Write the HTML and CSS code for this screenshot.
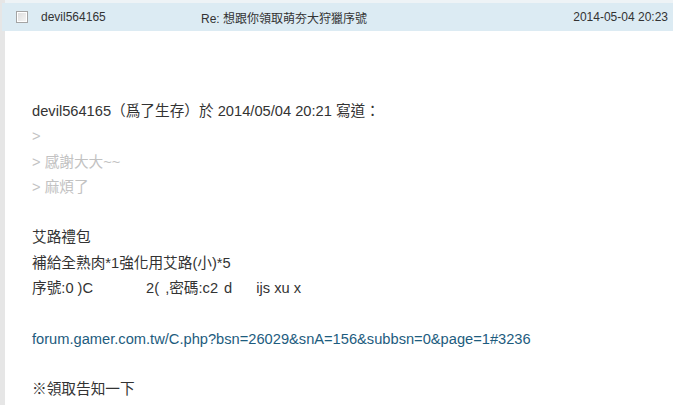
FILE: index.html
```html
<!DOCTYPE html>
<html lang="zh-Hant">
<head>
    <meta charset="UTF-8">
    <title>Re: 想跟你領取萌夯大狩獵序號</title>
    <link rel="stylesheet" href="styles.css">
</head>
<body>
    <div class="mail">
        <!-- Message header row -->
        <div class="mail-head">
            <span class="check"></span>
            <span class="from">devil564165</span>
            <span class="subject">Re: 想跟你領取萌夯大狩獵序號</span>
            <span class="date">2014-05-04 20:23</span>
        </div>

        <!-- Message body -->
        <div class="mail-body">
            <p>devil564165（爲了生存）於 2014/05/04 20:21 寫道：</p>
            <p class="quote">&gt;</p>
            <p class="quote">&gt; 感謝大大~~</p>
            <p class="quote">&gt; 麻煩了</p>
            <p>&nbsp;</p>
            <p>艾路禮包</p>
            <p>補給全熟肉*1強化用艾路(小)*5</p>
            <p>序號:0 )C<span class="gap-l"></span>2(<span class="gap-s"></span>,密碼:c2<span class="gap-s"></span>d<span class="gap-m"></span>ijs xu x</p>
            <p>&nbsp;</p>
            <p><a href="#" class="link">forum.gamer.com.tw/C.php?bsn=26029&amp;snA=156&amp;subbsn=0&amp;page=1#3236</a></p>
            <p>&nbsp;</p>
            <p>※領取告知一下</p>
        </div>
    </div>
</body>
</html>
```

FILE: styles.css
```css
* {
    margin: 0;
    padding: 0;
    box-sizing: border-box;
}
body {
    font-family: "Liberation Sans", Arial, "Noto Sans CJK TC", sans-serif;
    color: #333;
    background-color: #fff;
    width: 673px;
    height: 405px;
    overflow: hidden;
}

.mail {
    min-height: 405px;
    border-left: 5px solid #e6e6e6;
    padding-top: 3px;
    background: linear-gradient(#eef3f6, #eef3f6) top left / 100% 3px no-repeat;
}

/* Header row */
.mail-head {
    display: flex;
    align-items: center;
    height: 28px;
    margin-left: -3px;
    background-color: #dcebf3;
    font-size: 12px;
    color: #333;
}
.check {
    width: 12px;
    height: 12px;
    margin-left: 14px;
    border: 1px solid #a4a4a4;
    background: linear-gradient(135deg, #dcdcdc, #f6f6f6);
    box-shadow: inset 0 0 0 1px #fff;
}
.from {
    margin-left: 13px;
    width: 160px;
}
.subject {
    flex: 1;
}
.date {
    margin-right: 5px;
}

/* Body */
.mail-body {
    padding: 68px 0 0 27px;
    font-size: 14.67px;
    line-height: 25.3px;
}
.quote {
    color: #c2c2c2;
}
.link {
    color: #1d5c7e;
    text-decoration: none;
}
.gap-s {
    display: inline-block;
    width: 6px;
}
.gap-m {
    display: inline-block;
    width: 24px;
}
.gap-l {
    display: inline-block;
    width: 53px;
}
```
